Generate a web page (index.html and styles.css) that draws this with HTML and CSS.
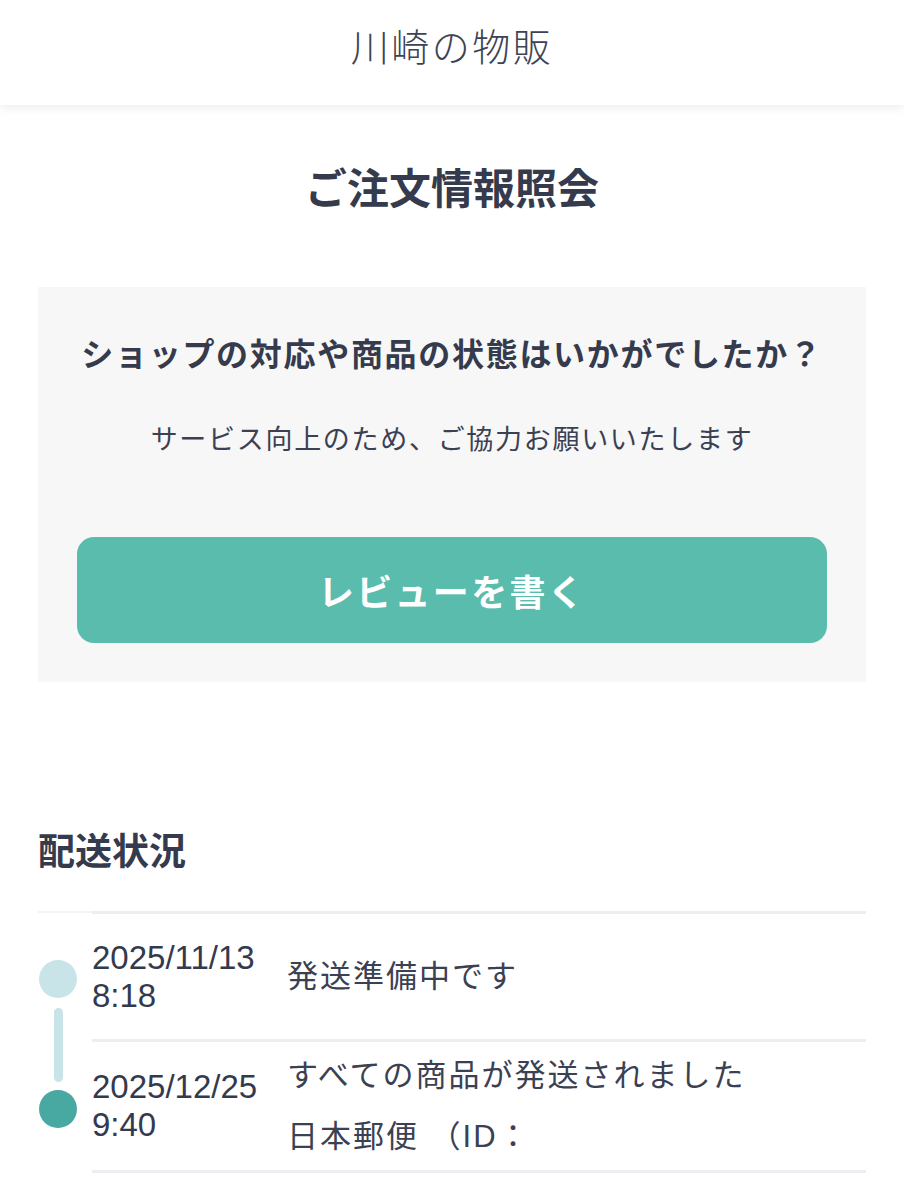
FILE: index.html
```html
<!DOCTYPE html>
<html lang="ja">
<head>
<meta charset="utf-8">
<title>ご注文情報照会</title>
<link rel="stylesheet" href="styles.css">
</head>
<body>
<header class="site-header">
  <div class="shop-name">川崎の物販</div>
</header>
<main class="page">
  <h1 class="page-title">ご注文情報照会</h1>

  <section class="review-card">
    <p class="review-question">ショップの対応や商品の状態はいかがでしたか？</p>
    <p class="review-sub">サービス向上のため、ご協力お願いいたします</p>
    <a class="review-button" href="#">レビューを書く</a>
  </section>

  <h2 class="section-title">配送状況</h2>

  <div class="timeline">
    <div class="tl-row tl-first">
      <div class="tl-marker">
        <div class="tl-track">
          <span class="tl-dot tl-dot-light"></span>
          <span class="tl-line tl-line-down"></span>
        </div>
      </div>
      <div class="tl-content">
        <div class="tl-date">2025/11/13<br>8:18</div>
        <div class="tl-status">
          <p>発送準備中です</p>
        </div>
      </div>
    </div>
    <div class="tl-row">
      <div class="tl-marker">
        <div class="tl-track tl-track-up">
          <span class="tl-line tl-line-up"></span>
          <span class="tl-dot tl-dot-dark"></span>
        </div>
      </div>
      <div class="tl-content">
        <div class="tl-date">2025/12/25<br>9:40</div>
        <div class="tl-status tl-status-multi">
          <p>すべての商品が発送されました</p>
          <p>日本郵便 （ID：</p>
        </div>
      </div>
    </div>
  </div>
</main>
</body>
</html>
```

FILE: styles.css
```css
* {
  box-sizing: border-box;
}

html, body {
  margin: 0;
  padding: 0;
  background: #ffffff;
}

body {
  font-family: "Liberation Sans", "Noto Sans CJK JP", sans-serif;
  color: #353b4d;
}

p {
  margin: 0;
}

.site-header {
  height: 105px;
  display: flex;
  align-items: center;
  justify-content: center;
  padding-bottom: 10px;
  background: #ffffff;
  box-shadow: 0 3px 10px rgba(0, 0, 0, 0.07);
  position: relative;
  z-index: 1;
}

.shop-name {
  font-size: 38px;
  font-weight: 300;
  letter-spacing: 2.5px;
  color: #3d4354;
  line-height: 1;
}

.page {
  padding: 0 38px 40px;
}

.page-title {
  margin: 55px 0 0;
  text-align: center;
  font-size: 42px;
  line-height: 60px;
  font-weight: 700;
  color: #353b4d;
}

.review-card {
  margin-top: 67px;
  background: #f7f7f8;
  padding: 45px 39px 39px;
  display: flex;
  flex-direction: column;
  align-items: stretch;
}

.review-question {
  text-align: center;
  font-size: 32px;
  line-height: 46px;
  font-weight: 700;
  letter-spacing: 1.7px;
  color: #353b4d;
}

.review-sub {
  margin-top: 42px;
  text-align: center;
  font-size: 27px;
  line-height: 40px;
  letter-spacing: 1.7px;
  color: #3b4152;
}

.review-button {
  margin-top: 77px;
  height: 106px;
  border-radius: 17px;
  background: #5abcad;
  color: #ffffff;
  text-decoration: none;
  display: flex;
  align-items: center;
  justify-content: center;
  font-size: 36px;
  font-weight: 700;
  letter-spacing: 2.3px;
}

.section-title {
  margin: 146px 0 0;
  font-size: 37px;
  line-height: 50px;
  font-weight: 700;
  color: #353b4d;
}

.timeline {
  margin-top: 33px;
}

.tl-row {
  display: grid;
  grid-template-columns: 54px 1fr;
}

.tl-marker {
  padding-left: 1px;
  display: flex;
}

.tl-first .tl-marker {
  border-top: 2px solid #f3f4f6;
}

.tl-track {
  width: 38px;
  display: flex;
  flex-direction: column;
  align-items: center;
  padding-top: 47px;
}

.tl-track-up {
  padding-top: 0;
}

.tl-dot {
  width: 38px;
  height: 38px;
  border-radius: 50%;
  flex: none;
}

.tl-dot-light {
  background: #c8e4e8;
}

.tl-dot-dark {
  background: #48a8a2;
  margin-top: 8px;
}

.tl-line {
  width: 9px;
  background: #c8e4e8;
}

.tl-line-down {
  flex: 1;
  margin-top: 10px;
  border-radius: 5px 5px 0 0;
}

.tl-line-up {
  height: 40px;
  flex: none;
  border-radius: 0 0 5px 5px;
}

.tl-content {
  display: grid;
  grid-template-columns: 195px 1fr;
  align-items: center;
  min-height: 131px;
  border-bottom: 3px solid #eceef2;
}

.tl-first .tl-content {
  border-top: 3px solid #eceef2;
}

.tl-date {
  font-family: "Liberation Sans", "Noto Sans CJK JP", sans-serif;
  font-size: 33px;
  line-height: 38px;
  color: #333a4d;
}

.tl-status {
  font-size: 31px;
  line-height: 44px;
  letter-spacing: 2px;
  color: #3b4152;
}

.tl-status-multi {
  line-height: 61px;
}
```
